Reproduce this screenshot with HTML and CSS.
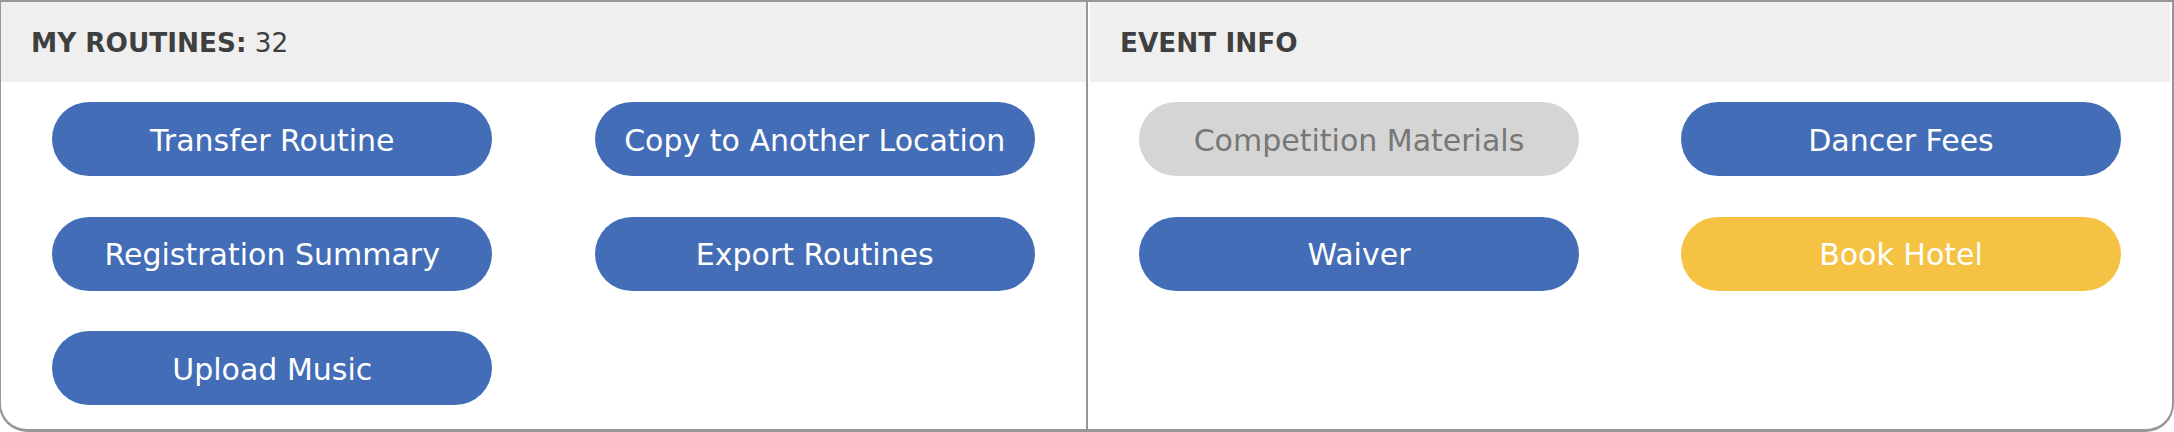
FILE: index.html
```html
<!DOCTYPE html>
<html lang="en">
<head>
<meta charset="utf-8">
<title>Routines</title>
<link rel="stylesheet" href="styles.css">
</head>
<body>
<div class="board">
  <section class="panel panel-left">
    <header class="panel-head"><strong>MY ROUTINES:</strong> 32</header>
    <div class="btn-grid">
      <a class="btn btn-blue">Transfer Routine</a>
      <a class="btn btn-blue">Copy to Another Location</a>
      <a class="btn btn-blue">Registration Summary</a>
      <a class="btn btn-blue">Export Routines</a>
      <a class="btn btn-blue">Upload Music</a>
    </div>
  </section>
  <section class="panel panel-right">
    <header class="panel-head"><strong>EVENT INFO</strong></header>
    <div class="btn-grid">
      <a class="btn btn-gray">Competition Materials</a>
      <a class="btn btn-blue">Dancer Fees</a>
      <a class="btn btn-blue">Waiver</a>
      <a class="btn btn-yellow">Book Hotel</a>
    </div>
  </section>
</div>
</body>
</html>
```

FILE: styles.css
```css
html, body {
  margin: 0;
  padding: 0;
  background: #ffffff;
}

body {
  font-family: "DejaVu Sans", Verdana, sans-serif;
  overflow: hidden;
}

.board {
  box-sizing: border-box;
  width: 2175px;
  height: 432px;
  margin-left: -1px;
  border: 2px solid #979797;
  border-bottom-width: 3px;
  border-radius: 0 0 28px 28px;
  display: grid;
  grid-template-columns: 1087px 1fr;
  overflow: hidden;
}

.panel {
  display: flex;
  flex-direction: column;
}

.panel-left {
  border-right: 2px solid #979797;
}

.panel-right .panel-head {
  margin: 0 2px 0 2px;
}

.panel-head {
  box-sizing: border-box;
  height: 80px;
  padding: 2px 0 0 30px;
  background: #efefef;
  color: #3f3f3f;
  font-size: 26.3px;
  display: flex;
  align-items: center;
  white-space: pre;
}

.panel-head strong {
  font-weight: bold;
}

.btn-grid {
  display: grid;
  grid-template-columns: 1fr 1fr;
  row-gap: 40.5px;
  padding-top: 20px;
}

.btn {
  box-sizing: border-box;
  justify-self: center;
  width: 440px;
  height: 74px;
  padding-top: 2px;
  border-radius: 37px;
  display: flex;
  align-items: center;
  justify-content: center;
  font-size: 30px;
  color: #ffffff;
  text-decoration: none;
  white-space: nowrap;
}

.btn-blue {
  background: #436db6;
}

.btn-gray {
  background: #d5d5d5;
  color: #777777;
}

.btn-yellow {
  background: #f6c244;
}
```
